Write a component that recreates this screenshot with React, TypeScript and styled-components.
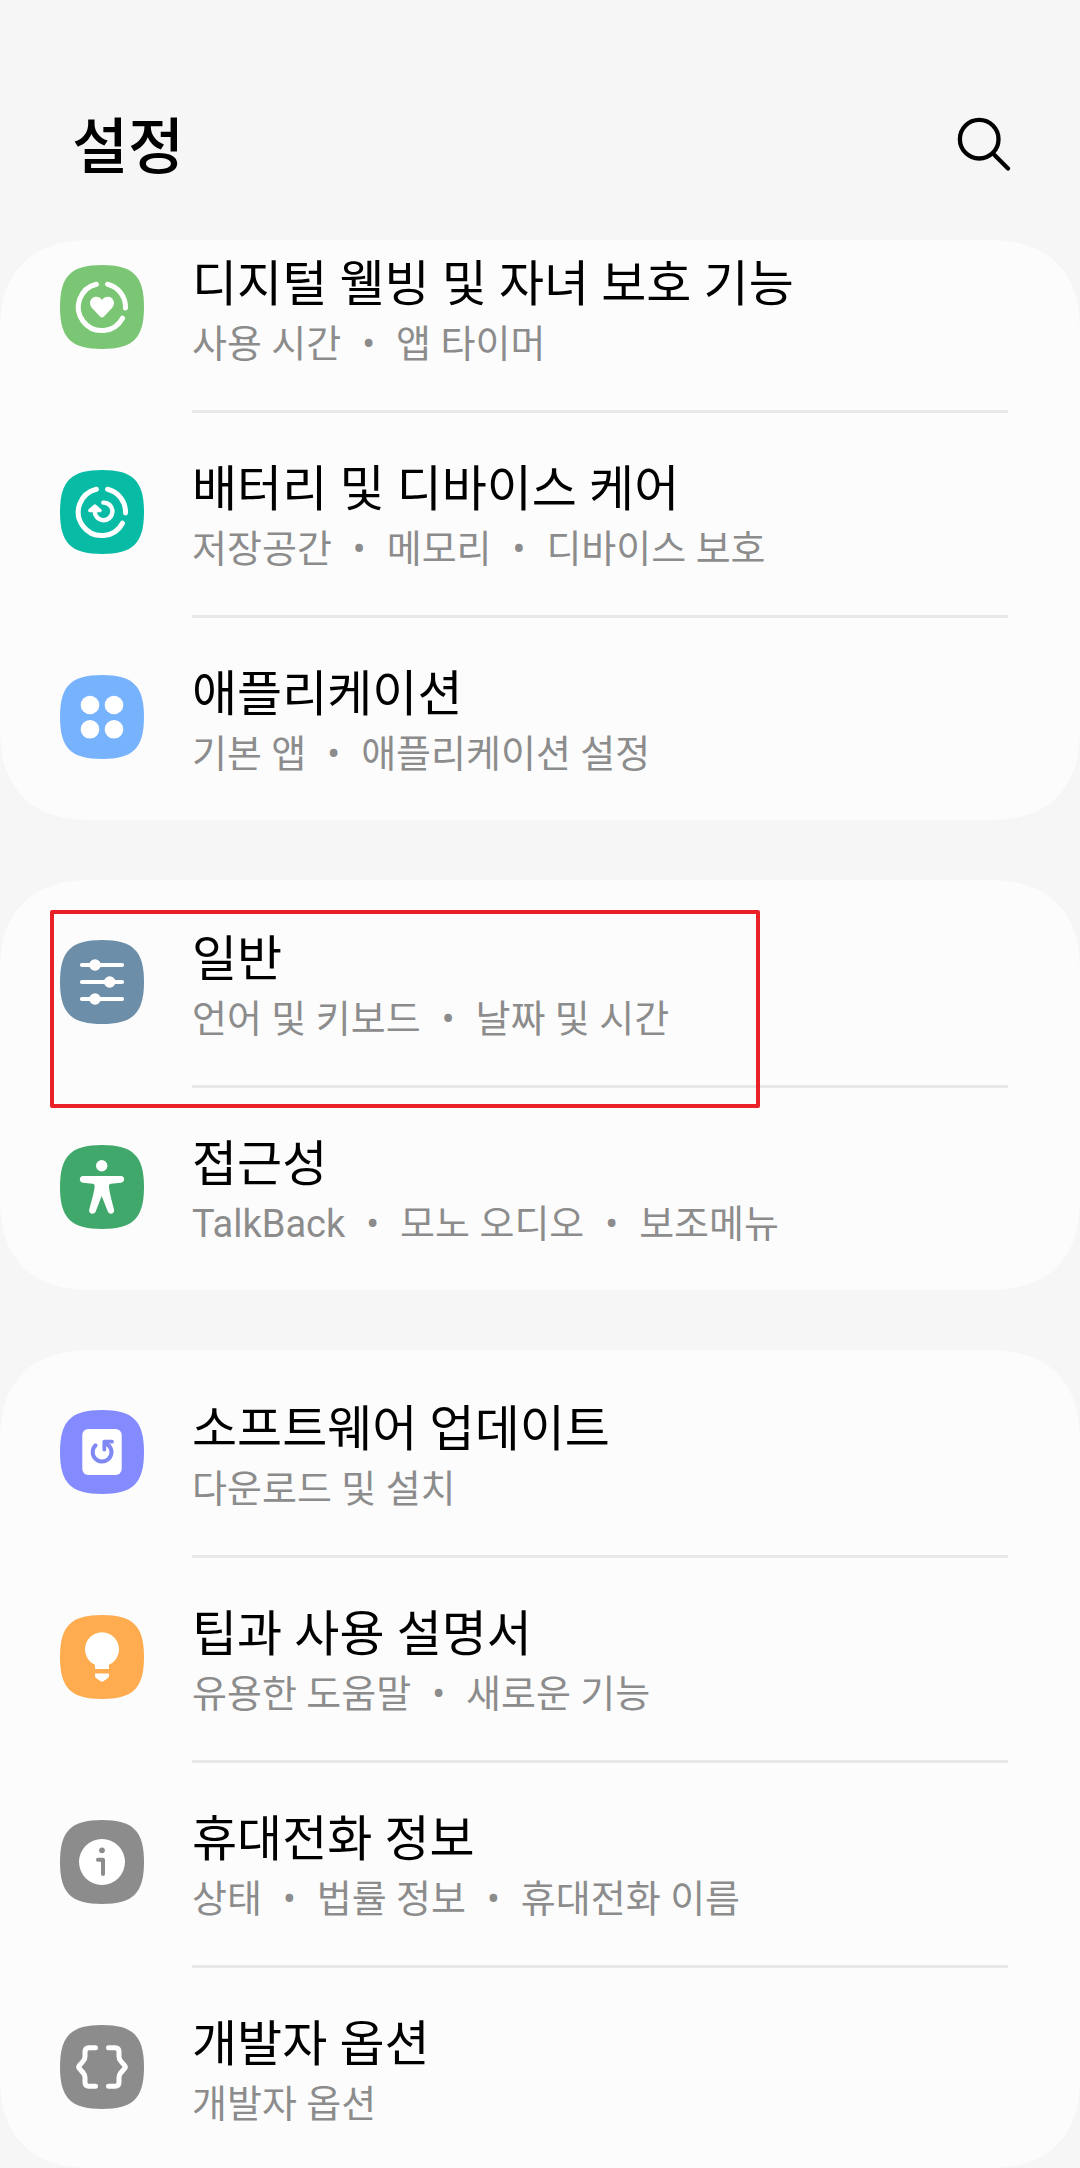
import React from "react";
import styled, { createGlobalStyle } from "styled-components";

const GlobalStyle = createGlobalStyle`
  *, *::before, *::after { box-sizing: border-box; }
  body {
    margin: 0;
    background: #f6f6f6;
    font-family: Roboto, "Noto Sans CJK KR", sans-serif;
  }
`;

const Page = styled.div`
  display: flex;
  flex-direction: column;
  min-height: 100vh;
  background: #f6f6f6;
`;

const Header = styled.header`
  display: flex;
  align-items: flex-start;
  justify-content: space-between;
  padding: 104px 56px 48px 72px;
`;

const Heading = styled.h1`
  margin: 0;
  font-size: 61px;
  line-height: 88px;
  font-weight: 500;
  color: #000;
`;

const SearchButton = styled.button`
  display: flex;
  align-items: center;
  justify-content: center;
  width: 80px;
  height: 80px;
  padding: 0;
  border: 0;
  background: none;
  color: #000;
  cursor: pointer;
`;

const Groups = styled.main`
  display: flex;
  flex-direction: column;
  gap: 60px;
`;

const Card = styled.ul`
  margin: 0;
  padding: 0;
  list-style: none;
  overflow: hidden;
  background: #fcfcfc;
  border-radius: 80px;

  @supports (corner-shape: superellipse(1.3)) {
    border-radius: 94px;
    corner-shape: superellipse(1.3);
  }
`;

const Item = styled.li<{ $scrolled: boolean }>`
  position: relative;
  margin-top: ${(p) => (p.$scrolled ? "-35px" : "0")};
`;

const RowLink = styled.a`
  display: flex;
  align-items: flex-start;
  gap: 48px;
  padding: 0 72px 0 60px;
  color: inherit;
  text-decoration: none;
`;

const Tile = styled.svg`
  flex: none;
  width: 84px;
  height: 84px;
  margin-top: 60px;
`;

const Body = styled.div<{ $divided: boolean; $end: boolean }>`
  flex: 1;
  min-width: 0;
  border-top: 3px solid ${(p) => (p.$divided ? "#e8e8e8" : "transparent")};
  padding: 46px 0 ${(p) => (p.$end ? "36px" : "38px")};
`;

const Title = styled.div`
  font-size: 49px;
  line-height: 62px;
  color: #000;
`;

const Summary = styled.div`
  font-size: 38px;
  line-height: 56px;
  color: #8c8c8c;
`;

const Dot = styled.span`
  margin: 0 21px;
`;

const Highlight = styled.div`
  position: absolute;
  top: 30px;
  left: 50px;
  width: 710px;
  max-width: calc(100% - 100px);
  height: 198px;
  border: 4px solid #ea2027;
  border-radius: 2px;
  pointer-events: none;
  z-index: 1;
`;

const ring = (
  <path
    d="M47.6 19.2A23.5 23.5 0 0 1 65.5 43M62.5 53.2A23.5 23.5 0 1 1 36.4 19.2"
    fill="none"
    stroke="#fff"
    strokeWidth="5"
    strokeLinecap="round"
  />
);

const glyphs = {
  wellbeing: (
    <>
      {ring}
      <path
        d="M42 35C44.5 31.2 49.5 30.8 52.3 33.8C54.7 36.5 54.5 40.3 52 42.9L44 51.5C42.8 52.8 41.2 52.8 40 51.5L32 42.9C29.5 40.3 29.3 36.5 31.7 33.8C34.5 30.8 39.5 31.2 42 35Z"
        fill="#fff"
      />
    </>
  ),
  care: (
    <>
      {ring}
      <path
        d="M43.3 32.6A8.8 8.8 0 1 1 34.9 40"
        fill="none"
        stroke="#fff"
        strokeWidth="4.4"
        strokeLinecap="round"
      />
      <path
        d="M29.8 40.6L34.9 36L40 40.6Z"
        fill="#fff"
        stroke="#fff"
        strokeWidth="3.4"
        strokeLinejoin="round"
      />
    </>
  ),
  apps: (
    <g fill="#fff">
      <circle cx="30" cy="30" r="9.3" />
      <circle cx="54" cy="30" r="9.3" />
      <circle cx="30" cy="54.3" r="9.3" />
      <circle cx="54" cy="54.3" r="9.3" />
    </g>
  ),
  general: (
    <>
      <path
        d="M22 25H62M22 42H62M22 59H62"
        stroke="#fff"
        strokeWidth="4.2"
        strokeLinecap="round"
      />
      <g fill="#fff">
        <circle cx="35" cy="25" r="5.8" />
        <circle cx="49.7" cy="42" r="5.8" />
        <circle cx="35" cy="59" r="5.8" />
      </g>
    </>
  ),
  accessibility: (
    <g fill="#fff">
      <circle cx="41.7" cy="20.8" r="5.7" />
      <path d="M23 31H61C65.2 31 65.2 37.3 61 37.8L51 38.8C49.4 39 48.8 40 49 42C49.3 46 50.5 51 54 64.5C55 68.5 50 70.3 48 67L41.7 51L35.5 67C33.5 70.3 28.2 68.5 29.3 64.5C33 51 34.2 46 34.6 42C34.8 40 34.2 39 32.6 38.8L23 37.8C18.8 37.3 18.8 31 23 31Z" />
    </g>
  ),
  update: (
    <>
      <rect x="22.3" y="19" width="39.4" height="46" rx="6" fill="#fff" />
      <path
        d="M35.6 35.3A9.4 9.4 0 1 0 49.4 36.2"
        fill="none"
        stroke="#8088f4"
        strokeWidth="4"
        strokeLinecap="round"
      />
      <path
        d="M52 31.7H44.3V39.5M45 32.5L49.4 36.4"
        fill="none"
        stroke="#8088f4"
        strokeWidth="3.8"
        strokeLinecap="round"
        strokeLinejoin="round"
      />
    </>
  ),
  tips: (
    <g fill="#fff">
      <path d="M35 54V49.8A17 17 0 1 1 49 49.8V54Z" />
      <path d="M35 58.6H49V61.5C49 62.5 44.5 65.5 43.3 66.3Q42 67.2 40.7 66.3C39.5 65.5 35 62.5 35 61.5Z" />
    </g>
  ),
  info: (
    <>
      <circle cx="42" cy="42" r="23" fill="#fff" />
      <circle cx="42" cy="30.3" r="2.9" fill="#8c8c8c" />
      <path
        d="M38 39.7H43V54"
        fill="none"
        stroke="#8c8c8c"
        strokeWidth="4"
        strokeLinecap="round"
        strokeLinejoin="round"
      />
    </>
  ),
  developer: (
    <path
      d="M35.5 22.7H29Q25 22.7 25 26.7V31.5Q25 34 23.3 36L19.5 40.3Q18 42 19.5 43.7L23.3 48Q25 50 25 52.5V57.3Q25 61.3 29 61.3H35.5M48.5 22.7H55Q59 22.7 59 26.7V31.5Q59 34 60.7 36L64.5 40.3Q66 42 64.5 43.7L60.7 48Q59 50 59 52.5V57.3Q59 61.3 55 61.3H48.5"
      fill="none"
      stroke="#fff"
      strokeWidth="5"
      strokeLinecap="round"
      strokeLinejoin="round"
    />
  ),
};

type Setting = {
  icon: keyof typeof glyphs;
  color: string;
  title: string;
  summary: string[];
  highlighted?: boolean;
};

const groups: Setting[][] = [
  [
    { icon: "wellbeing", color: "#7bc674", title: "디지털 웰빙 및 자녀 보호 기능", summary: ["사용 시간", "앱 타이머"] },
    { icon: "care", color: "#07bba5", title: "배터리 및 디바이스 케어", summary: ["저장공간", "메모리", "디바이스 보호"] },
    { icon: "apps", color: "#77b2fc", title: "애플리케이션", summary: ["기본 앱", "애플리케이션 설정"] },
  ],
  [
    { icon: "general", color: "#6c8ea8", title: "일반", summary: ["언어 및 키보드", "날짜 및 시간"], highlighted: true },
    { icon: "accessibility", color: "#40a86a", title: "접근성", summary: ["TalkBack", "모노 오디오", "보조메뉴"] },
  ],
  [
    { icon: "update", color: "#838bff", title: "소프트웨어 업데이트", summary: ["다운로드 및 설치"] },
    { icon: "tips", color: "#ffac50", title: "팁과 사용 설명서", summary: ["유용한 도움말", "새로운 기능"] },
    { icon: "info", color: "#8c8c8c", title: "휴대전화 정보", summary: ["상태", "법률 정보", "휴대전화 이름"] },
    { icon: "developer", color: "#8c8c8c", title: "개발자 옵션", summary: ["개발자 옵션"] },
  ],
];

export default function App() {
  return (
    <Page>
      <GlobalStyle />
      <Header>
        <Heading>설정</Heading>
        <SearchButton type="button" aria-label="검색">
          <svg width="54" height="54" viewBox="0 0 54 54" fill="none" stroke="currentColor" strokeWidth="4.3" strokeLinecap="round" aria-hidden="true">
            <circle cx="22.2" cy="22.2" r="19.3" />
            <path d="M36 36.5L51 51.5" />
          </svg>
        </SearchButton>
      </Header>
      <Groups>
        {groups.map((items, g) => (
          <Card key={g}>
            {items.map((item, i) => (
              <Item key={item.title} $scrolled={g === 0 && i === 0}>
                <RowLink href="#">
                  <Tile viewBox="0 0 84 84" aria-hidden="true">
                    <path
                      d="M42 0C73 0 84 11 84 42S73 84 42 84S0 73 0 42S11 0 42 0Z"
                      fill={item.color}
                    />
                    {glyphs[item.icon]}
                  </Tile>
                  <Body $divided={i > 0} $end={g === groups.length - 1 && i === items.length - 1}>
                    <Title>{item.title}</Title>
                    <Summary>
                      {item.summary.map((part, n) => (
                        <React.Fragment key={part}>
                          {n > 0 && <Dot>•</Dot>}
                          {part}
                        </React.Fragment>
                      ))}
                    </Summary>
                  </Body>
                </RowLink>
                {item.highlighted && <Highlight />}
              </Item>
            ))}
          </Card>
        ))}
      </Groups>
    </Page>
  );
}
